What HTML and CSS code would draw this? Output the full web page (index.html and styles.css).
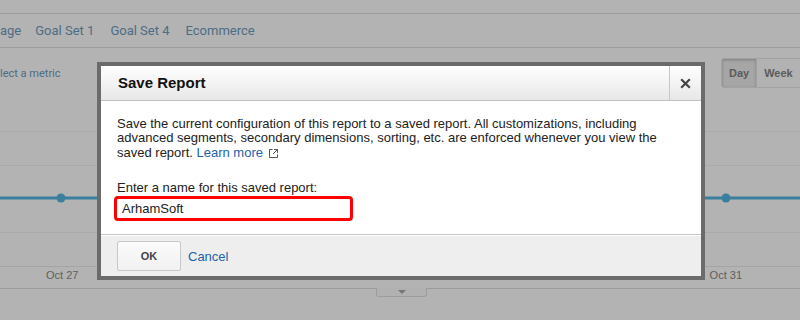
FILE: index.html
```html
<!DOCTYPE html>
<html lang="en">
<head>
<meta charset="utf-8">
<title>Save Report</title>
<link rel="stylesheet" href="styles.css">
</head>
<body>
<div class="page">
  <div class="report">
    <div class="topstrip"></div>
    <nav class="tabs">
      <a class="tab first">age</a>
      <a class="tab">Goal Set 1</a>
      <a class="tab">Goal Set 4</a>
      <a class="tab">Ecommerce</a>
    </nav>
    <div class="chart-head">
      <span class="metric">lect a metric</span>
      <div class="periods-slot">
        <div class="periods">
          <button class="period active">Day</button>
          <button class="period">Week</button>
          <button class="period more" aria-label="Month"></button>
        </div>
      </div>
    </div>
    <svg class="plot" width="800" height="135" viewBox="0 0 800 135">
      <g stroke="#aaaaaa" stroke-width="1">
        <line x1="0" y1="0.5" x2="800" y2="0.5"/>
        <line x1="0" y1="34.5" x2="800" y2="34.5"/>
        <line x1="0" y1="67.5" x2="800" y2="67.5"/>
        <line x1="0" y1="101.5" x2="800" y2="101.5"/>
      </g>
      <line x1="0" y1="67" x2="800" y2="67" stroke="#3b7f9e" stroke-width="3"/>
      <circle cx="61" cy="67" r="4.5" fill="#3b7f9e"/>
      <circle cx="726" cy="67" r="4.5" fill="#3b7f9e"/>
    </svg>
    <div class="axis">
      <span class="axis-label first">Oct 27</span>
      <span class="axis-label last">Oct 31</span>
    </div>
    <div class="drawer-tab"><span class="caret"></span></div>
  </div>

  <div class="dialog">
    <div class="dialog-header">
      <h2 class="dialog-title">Save Report</h2>
      <button class="dialog-close" aria-label="Close">
        <svg width="11" height="11" viewBox="0 0 11 11"><path d="M1.2 1.2L9.8 9.8M9.8 1.2L1.2 9.8" stroke="#444" stroke-width="2.2"/></svg>
      </button>
    </div>
    <div class="dialog-body">
      <p>Save the current configuration of this report to a saved report. All customizations, including<br>advanced segments, secondary dimensions, sorting, etc. are enforced whenever you view the<br>saved report. <a class="link">Learn more</a><svg class="ext" width="9" height="9" viewBox="0 0 9 9"><path d="M3.5 0.5H0.5V8.5H8.5V5.5M5 0.5H8.5V4M8.5 0.5L4 5" fill="none" stroke="#555" stroke-width="1"/></svg></p>
      <label class="field-label">Enter a name for this saved report:</label>
      <input class="name-input" type="text" value="ArhamSoft">
    </div>
    <div class="dialog-footer">
      <button class="btn-ok">OK</button>
      <a class="link cancel">Cancel</a>
    </div>
  </div>
</div>
</body>
</html>
```
FILE: styles.css
```css
body {
  margin: 0;
  background: #b3b3b3;
  font-family: "Liberation Sans", Arial, sans-serif;
}

.page {
  position: relative;
  width: 800px;
  height: 320px;
  overflow: hidden;
}

.topstrip {
  height: 13px;
  border-bottom: 1px solid #9e9e9e;
}

.tabs {
  height: 34px;
  box-sizing: border-box;
  padding-bottom: 1px;
  border-bottom: 1px solid #9e9e9e;
  display: flex;
  align-items: center;
  gap: 16px;
  font: 13px Roboto, "Liberation Sans", sans-serif;
  color: #4d6c86;
}

.tab.first {
  margin-right: -2px;
}

.chart-head {
  height: 83px;
  display: grid;
  grid-template-columns: 1fr 79px;
}

.metric {
  margin-top: 19px;
  font: 11px/13px Roboto, "Liberation Sans", sans-serif;
  color: #4d6c86;
}

.periods {
  margin-top: 10px;
  display: flex;
  width: max-content;
  height: 30px;
  box-sizing: border-box;
  border: 1px solid #a2a2a2;
  border-radius: 3px;
}

.period {
  border: 0;
  border-left: 1px solid #a2a2a2;
  background: #b2b2b2;
  padding: 0 7px;
  font: bold 11px "Liberation Sans", Arial, sans-serif;
  color: #5b5b5b;
}

.period:first-child {
  border-left: 0;
  border-radius: 2px 0 0 2px;
}

.period.active {
  background: #a6a6a6;
  box-shadow: inset 0 1px 3px rgba(0, 0, 0, 0.25);
}

.period.more {
  width: 40px;
}

.plot {
  display: block;
}

.axis {
  display: flex;
  height: 19px;
  border-top: 1px solid #a4a4a4;
  border-bottom: 1px solid #9c9c9c;
  padding-top: 2px;
  box-sizing: content-box;
  font: 11px/13px "Liberation Sans", Arial, sans-serif;
  color: #5f5f5f;
}

.axis-label.first {
  margin-left: 46px;
}

.axis-label.last {
  margin-left: auto;
  margin-right: 58px;
}

.drawer-tab {
  margin: -1px 0 0 376px;
  width: 49px;
  height: 8px;
  border: 1px solid #9c9c9c;
  border-top: 0;
  border-radius: 0 0 3px 3px;
  background: #b1b1b1;
  display: flex;
  justify-content: center;
  align-items: center;
}

.caret {
  width: 0;
  height: 0;
  border-left: 4px solid transparent;
  border-right: 4px solid transparent;
  border-top: 4px solid #777;
}

/* Dialog */
.dialog {
  position: absolute;
  left: 97px;
  top: 62px;
  width: 608px;
  box-sizing: border-box;
  border: 4px solid #6b6b6b;
  background: #fff;
}

.dialog-header {
  display: flex;
  height: 34px;
  border-bottom: 1px solid #c3c3c3;
  background: linear-gradient(#ffffff, #e7e7e7);
}

.dialog-title {
  flex: 1;
  margin: 0;
  padding-left: 17px;
  font: bold 15px/34px "Liberation Sans", Arial, sans-serif;
  color: #111;
}

.dialog-close {
  width: 32px;
  padding: 0;
  border: 0;
  border-left: 1px solid #c8c8c8;
  background: transparent;
  display: flex;
  align-items: center;
  justify-content: center;
}

.dialog-body {
  padding: 16px;
  border-bottom: 1px solid #c4c4c4;
  font: 13px/1.1 "Liberation Sans", Arial, sans-serif;
  color: #222;
}

.dialog-body p {
  margin: 0 0 21px;
}

.link {
  color: #1c62a8;
  text-decoration: none;
}

.ext {
  margin-left: 6px;
  vertical-align: -1px;
}

.field-label {
  display: block;
}

.name-input {
  display: block;
  margin-top: 4px;
  width: 233px;
  height: 19px;
  box-sizing: border-box;
  border: 0;
  outline: 3px solid #ff0000;
  border-radius: 1px;
  padding: 0 5px;
  font: 13px "Liberation Sans", Arial, sans-serif;
  color: #222;
  background: #fff;
}

.dialog-footer {
  display: flex;
  align-items: center;
  gap: 7px;
  padding: 5px 16px;
  border-top: 1px solid #fff;
  background: #eeeeee;
}

.btn-ok {
  width: 64px;
  height: 30px;
  border: 1px solid #c8c8c8;
  border-radius: 2px;
  background: linear-gradient(#fbfbfb, #f1f1f1);
  font: bold 11px "Liberation Sans", Arial, sans-serif;
  color: #444;
}

.cancel {
  font-size: 13px;
}
```
